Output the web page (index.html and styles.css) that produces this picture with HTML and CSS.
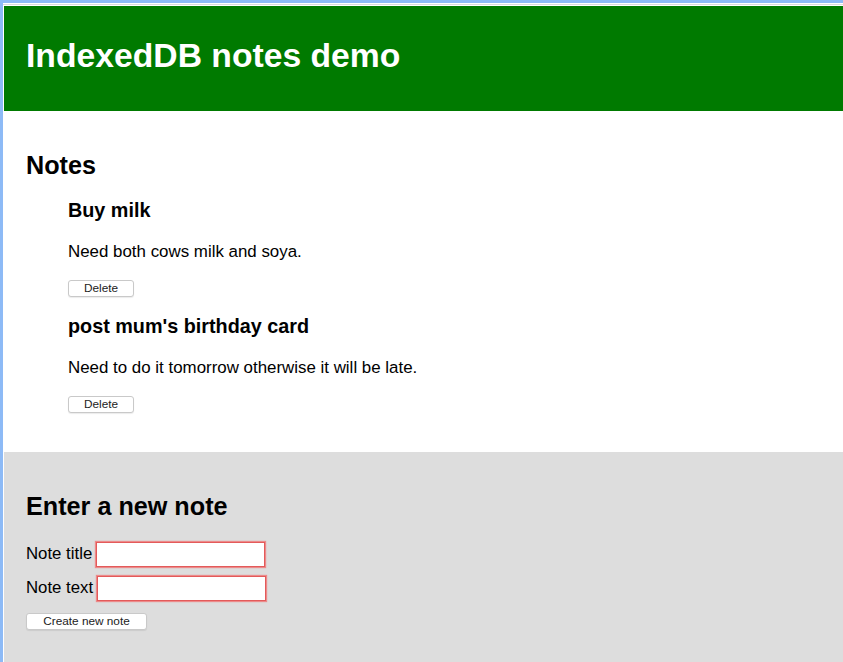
FILE: index.html
```html
<!DOCTYPE html>
<html lang="en">
<head>
<meta charset="utf-8">
<title>IndexedDB notes demo</title>
<link rel="stylesheet" href="styles.css">
</head>
<body>
<div class="frame">
  <div class="page">
    <header class="site-header">
      <h1 class="site-title">IndexedDB notes demo</h1>
    </header>
    <section class="notes">
      <h2 class="section-title">Notes</h2>
      <ul class="note-list">
        <li class="note">
          <h3 class="note-title">Buy milk</h3>
          <p class="note-text">Need both cows milk and soya.</p>
          <button class="btn">Delete</button>
        </li>
        <li class="note">
          <h3 class="note-title">post mum's birthday card</h3>
          <p class="note-text">Need to do it tomorrow otherwise it will be late.</p>
          <button class="btn">Delete</button>
        </li>
      </ul>
    </section>
    <section class="new-note">
      <h2 class="section-title">Enter a new note</h2>
      <form class="note-form">
        <div class="field">
          <label class="field-label" for="title">Note title</label>
          <input class="field-input" id="title" type="text" required>
        </div>
        <div class="field">
          <label class="field-label" for="body">Note text</label>
          <input class="field-input" id="body" type="text" required>
        </div>
        <button class="btn btn-submit" type="button">Create new note</button>
      </form>
    </section>
  </div>
</div>
</body>
</html>
```
FILE: styles.css
```css
html, body {
  margin: 0;
  padding: 0;
  background: #ffffff;
}

body {
  font-family: "Liberation Sans", Arial, Helvetica, sans-serif;
  color: #000;
  height: 662px;
  overflow: hidden;
}

.frame {
  border-top: 3px solid #8dbaf6;
  border-left: 3px solid #8dbaf6;
  min-height: 659px;
  background: #ffffff;
}

.page {
  margin-top: 1px;
  border-top: 1px solid #dcdcdc;
  padding-top: 1px;
  padding-left: 1px;
}

.site-header {
  background: #007a00;
  padding: 30px 22px 37px;
}

.site-title {
  margin: 0;
  font-size: 33.7px;
  line-height: 38px;
  font-weight: bold;
  color: #ffffff;
}

.notes {
  padding: 40px 22px 39px;
  background: #ffffff;
}

.section-title {
  margin: 0;
  font-size: 25.2px;
  line-height: 29px;
  font-weight: bold;
}

.notes .section-title {
  margin-bottom: 19px;
}

.note-list {
  list-style: none;
  margin: 0;
  padding: 0 0 0 42px;
}

.note + .note {
  margin-top: 18px;
}

.note-title {
  margin: 0 0 20px;
  font-size: 19.8px;
  line-height: 23px;
  font-weight: bold;
}

.note-text {
  margin: 0 0 19px;
  font-size: 16.9px;
  line-height: 19px;
}

.btn {
  display: block;
  margin: 0;
  height: 17px;
  padding: 0 15px;
  font-family: "Liberation Sans", Arial, Helvetica, sans-serif;
  font-size: 11.8px;
  line-height: 15px;
  color: #222;
  background: #ffffff;
  border: 1px solid #c9c9c9;
  border-radius: 3px;
  box-shadow: 0 1px 1px rgba(0, 0, 0, 0.08);
}

.note .btn {
  width: 66px;
  padding: 0;
}

.new-note {
  background: #dddddd;
  padding: 40px 22px 60px;
}

.new-note .section-title {
  margin-bottom: 21px;
}

.note-form {
  display: flex;
  flex-direction: column;
  align-items: flex-start;
}

.field {
  display: flex;
  align-items: center;
  gap: 3.5px;
  margin-bottom: 9px;
}

.field:last-of-type {
  margin-bottom: 12px;
}

.field-label {
  font-size: 16.8px;
  line-height: 19px;
  padding-bottom: 2px;
}

.field-input {
  box-sizing: border-box;
  width: 169px;
  height: 25px;
  margin: 0;
  padding: 2px 3px;
  background: #ffffff;
  border: 1px solid #e35a5a;
  box-shadow: 0 0 1px 1px rgba(240, 110, 110, 0.75);
  font-size: 14px;
  outline: none;
}

.btn-submit {
  width: 121px;
  padding: 0;
}
```
